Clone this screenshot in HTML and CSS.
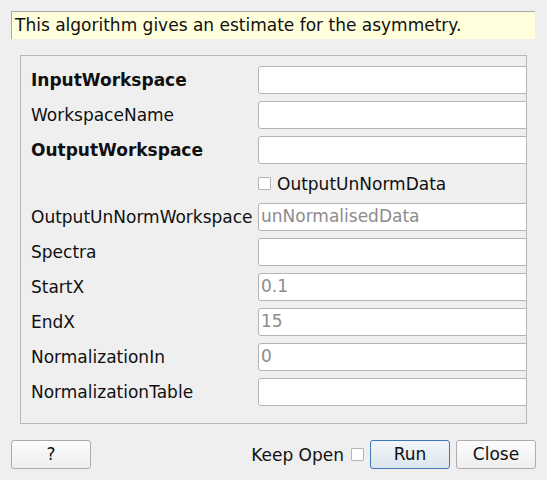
FILE: index.html
```html
<!DOCTYPE html>
<html>
<head>
<meta charset="utf-8">
<link rel="stylesheet" href="styles.css">
</head>
<body>
<div class="desc">This algorithm gives an estimate for the asymmetry.</div>
<div class="frame">
  <div class="grid">
    <div class="label bold">InputWorkspace</div>
    <div class="field"></div>
    <div class="label">WorkspaceName</div>
    <div class="field"></div>
    <div class="label bold">OutputWorkspace</div>
    <div class="field"></div>
    <div class="label"></div>
    <div class="check-row"><span class="box"></span><span>OutputUnNormData</span></div>
    <div class="label">OutputUnNormWorkspace</div>
    <div class="field">unNormalisedData</div>
    <div class="label">Spectra</div>
    <div class="field"></div>
    <div class="label">StartX</div>
    <div class="field">0.1</div>
    <div class="label">EndX</div>
    <div class="field">15</div>
    <div class="label">NormalizationIn</div>
    <div class="field">0</div>
    <div class="label">NormalizationTable</div>
    <div class="field"></div>
  </div>
</div>
<div class="bar">
  <div class="btn">?</div>
  <div class="spacer"></div>
  <span class="keep">Keep Open</span>
  <span class="box keep-box"></span>
  <div class="btn default">Run</div>
  <div class="btn">Close</div>
</div>
</body>
</html>
```
FILE: styles.css
```css
html, body {
  margin: 0;
  padding: 0;
  background: #efefef;
  font-family: "DejaVu Sans", sans-serif;
  font-size: 17px;
  color: #101010;
}
body {
  width: 547px;
  height: 480px;
  overflow: hidden;
}
.desc {
  margin: 11px 12px 0 11px;
  height: 28px;
  line-height: 26px;
  box-sizing: border-box;
  border-top: 1px solid #a8a8a8;
  border-left: 1px solid #a8a8a8;
  background: #ffffdc;
  padding-left: 3px;
  white-space: nowrap;
}
.frame {
  margin: 16px 0 0 20px;
  width: 507px;
  height: 369px;
  box-sizing: border-box;
  border: 1px solid #b8b8b8;
  overflow: hidden;
  padding: 10px 0 0 10px;
}
.grid {
  display: grid;
  grid-template-columns: 227px 300px;
  grid-template-rows: 28px 28px 28px 25px 28px 28px 28px 28px 28px 28px;
  row-gap: 7px;
}
.label {
  display: flex;
  align-items: center;
  white-space: nowrap;
  padding-bottom: 1px;
}
.bold {
  font-weight: bold;
}
.field {
  box-sizing: border-box;
  height: 28px;
  background: #fff;
  border: 1px solid #b4b4b4;
  border-radius: 3px;
  color: #8c8c8c;
  padding-left: 2px;
  line-height: 25px;
  white-space: nowrap;
}
.check-row {
  display: flex;
  align-items: center;
  gap: 6px;
}
.box {
  display: inline-block;
  width: 13px;
  height: 13px;
  box-sizing: border-box;
  background: #fff;
  border: 1px solid #b4b4b4;
  border-radius: 1px;
  flex: none;
}
.bar {
  display: flex;
  align-items: center;
  margin: 16px 11px 0 11px;
  height: 29px;
}
.spacer {
  flex: 1;
}
.btn {
  width: 80px;
  height: 29px;
  box-sizing: border-box;
  border: 1px solid #acacac;
  border-radius: 3px;
  background: linear-gradient(#fcfcfc, #eeeeee);
  display: flex;
  align-items: center;
  justify-content: center;
  white-space: nowrap;
  padding-bottom: 1px;
}
.btn.default {
  border-color: #3b79b8;
  background: linear-gradient(#f2f6fa, #dbe5ee);
  margin-right: 6px;
}
.keep {
  margin-right: 7px;
}
.keep-box {
  margin-right: 6px;
}
```
